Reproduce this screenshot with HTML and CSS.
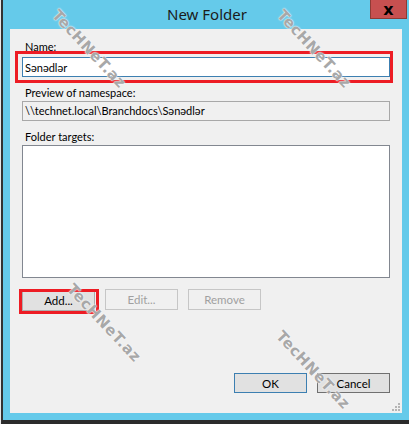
FILE: index.html
```html
<!DOCTYPE html>
<html lang="az">
<head>
    <meta charset="UTF-8">
    <meta name="viewport" content="width=device-width, initial-scale=1.0">
    <title>New Folder</title>
    <link rel="stylesheet" href="styles.css">
</head>
<body>
    <div class="window">
        <div class="titlebar">
            <span></span>
            <span class="title">New Folder</span>
            <button class="close">x</button>
        </div>
        <div class="client">
            <label class="label">Name:</label>
            <div class="field">
                <input type="text" class="textbox focus" value="Sənədlər" />
                <!-- highlight -->
                <div class="mark mark-name"></div>
            </div>

            <label class="label gap">Preview of namespace:</label>
            <div class="textbox readonly">\\technet.local\Branchdocs\Sənədlər</div>

            <label class="label gap">Folder targets:</label>
            <div class="list"></div>

            <div class="buttons">
                <div class="field">
                    <button class="btn">Add...</button>
                    <div class="mark mark-add"></div>
                </div>
                <button class="btn" disabled>Edit...</button>
                <button class="btn" disabled>Remove</button>
            </div>

            <div class="footer">
                <button class="btn default">OK</button>
                <button class="btn cancel">Cancel</button>
            </div>

            <div class="grip">
                <i></i><i></i><i></i><i></i><i></i><i></i>
            </div>
        </div>

        <!-- watermark -->
        <span class="wm wm1">TecHNeT.az</span>
        <span class="wm wm2">TecHNeT.az</span>
        <span class="wm wm3">TecHNeT.az</span>
        <span class="wm wm4">TecHNeT.az</span>
    </div>
</body>
</html>
```

FILE: styles.css
```css
*{
    margin: 0;
    padding: 0;
    box-sizing: border-box;
    font-family: "Lato", "Noto Sans", sans-serif;
}
body{
    width: 409px;
    height: 424px;
    background-color: #e8e8e8;
    padding-left: 1px;
    overflow: hidden;
}
.window{
    position: relative;
    width: 408px;
    height: 424px;
    background-color: #65caea;
    border-left: 2px solid #333333;
    border-bottom: 4px solid #2b2b2b;
    display: flex;
    flex-direction: column;
    overflow: hidden;
}
.titlebar{
    height: 29px;
    display: grid;
    grid-template-columns: 1fr auto 1fr;
}
.title{
    font-family: "Noto Sans", sans-serif;
    font-size: 15px;
    color: #1b1b1b;
    line-height: 28px;
    padding-left: 2px;
}
.close{
    justify-self: end;
    width: 37px;
    height: 19px;
    margin-right: 2px;
    background-color: #c75050;
    border: 1px solid #8e3b35;
    border-top: none;
    color: #000000;
    font-family: "DejaVu Sans", sans-serif;
    font-weight: bold;
    font-size: 16px;
    line-height: 15px;
}
.client{
    position: relative;
    flex: 1;
    margin: 0 7px 7px 7px;
    background-color: #f0f0f0;
    padding: 10px 12px 20px 12px;
    display: flex;
    flex-direction: column;
}
.label{
    display: block;
    font-size: 11px;
    line-height: 15px;
    color: #000000;
    padding-left: 3px;
    margin-bottom: 2px;
}
.label.gap{
    margin-top: 8px;
    margin-bottom: 1px;
}
.field{
    position: relative;
}
.textbox{
    display: block;
    width: 100%;
    height: 20px;
    border: 1px solid #7a7a7a;
    background-color: #ffffff;
    font-size: 11px;
    padding: 0 2px;
    line-height: 18px;
    color: #000000;
    outline: none;
}
.textbox.focus{
    border-color: #3c7fb1;
    margin-top: 1px;
}
.textbox.readonly{
    background-color: #f0f0f0;
    border-color: #a8a8a8;
}
.list{
    height: 133px;
    background-color: #ffffff;
    border: 1px solid #828790;
}
.buttons{
    display: flex;
    gap: 10px;
    margin-top: 11px;
}
.footer{
    display: flex;
    justify-content: flex-end;
    gap: 10px;
    margin-top: auto;
}
.btn{
    width: 73px;
    height: 21px;
    background-color: #e1e1e1;
    border: 1px solid #adadad;
    font-size: 11.5px;
    color: #000000;
}
.btn:disabled{
    background-color: #f0f0f0;
    border-color: #c6c6c6;
    color: #a0a0a0;
}
.btn.default{
    border-color: #3c7fb1;
    height: 20px;
}
.btn.cancel{
    border-color: #707070;
    height: 20px;
}
.mark{
    position: absolute;
    border: 3px solid #ed1c24;
}
.mark-name{
    top: -5px;
    left: -7px;
    right: -3px;
    bottom: -6px;
}
.mark-add{
    top: 0;
    left: -3px;
    right: -4px;
    bottom: -3px;
}
.grip{
    position: absolute;
    right: 2px;
    bottom: 2px;
    width: 8px;
    height: 8px;
}
.grip i{
    position: absolute;
    width: 2px;
    height: 2px;
    background-color: #b4b4b4;
}
.grip i:nth-child(1){ right: 0; bottom: 0; }
.grip i:nth-child(2){ right: 3px; bottom: 0; }
.grip i:nth-child(3){ right: 6px; bottom: 0; }
.grip i:nth-child(4){ right: 0; bottom: 3px; }
.grip i:nth-child(5){ right: 3px; bottom: 3px; }
.grip i:nth-child(6){ right: 0; bottom: 6px; }

.wm{
    position: absolute;
    font-family: "DejaVu Sans", sans-serif;
    font-weight: bold;
    font-size: 15px;
    letter-spacing: 0.5px;
    color: #a8a8a8;
    text-shadow: 0 0 2px #ffffff, 0 0 1px #ffffff;
    transform: translate(-50%, -50%) rotate(47deg);
    white-space: nowrap;
    pointer-events: none;
}
.wm1{ left: 86px; top: 49px; }
.wm2{ left: 311px; top: 49px; }
.wm3{ left: 101px; top: 323px; }
.wm4{ left: 310px; top: 370px; }
```
